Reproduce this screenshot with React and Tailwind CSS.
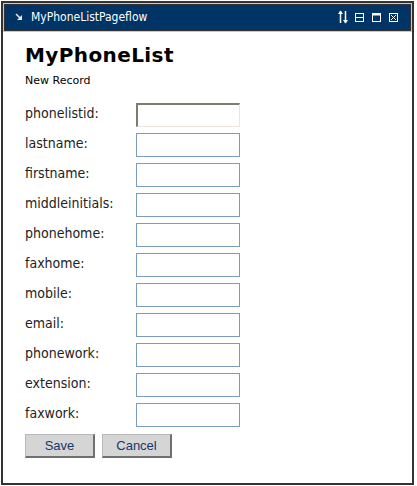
import React from 'react';

const FIELDS = [
  'phonelistid',
  'lastname',
  'firstname',
  'middleinitials',
  'phonehome',
  'faxhome',
  'mobile',
  'email',
  'phonework',
  'extension',
  'faxwork',
];

const cond = { fontFamily: '"DejaVu Sans Condensed", "DejaVu Sans", sans-serif', fontStretch: 'condensed' };

const TitleBar = () => (
  <div className="border border-[#c8c8c8]">
    <div className="border border-[#333] bg-[#003366] h-[27px] flex items-center text-white">
      <svg width="8" height="8" viewBox="0 0 8 8" className="ml-[10px] mt-[-2px]">
        <path d="M1 1 L6 6" stroke="#e6e6e6" strokeWidth="1.6" />
        <path d="M7 2 V7 H2 Z" fill="#e6e6e6" />
      </svg>
      <span className="ml-[8px] text-[12px] leading-[14px] mt-[-1px]" style={cond}>
        MyPhoneListPageflow
      </span>
      <div className="ml-auto mr-[12px] flex items-center mt-[-1px]">
        <svg width="10" height="14" viewBox="0 0 10 14">
          <path d="M2.5 1 V13" stroke="#fff" strokeWidth="1.5" />
          <path d="M2.5 0.5 L0 4 H5 Z" fill="#fff" />
          <path d="M7.5 1 V13" stroke="#fff" strokeWidth="1.5" />
          <path d="M7.5 13.5 L5 10 H10 Z" fill="#fff" />
        </svg>
        <svg width="9" height="9" viewBox="0 0 9 9" className="ml-[7px]">
          <rect x="0.5" y="0.5" width="8" height="8" fill="none" stroke="#fff" />
          <path d="M0 4.5 H9" stroke="#fff" />
        </svg>
        <svg width="9" height="9" viewBox="0 0 9 9" className="ml-[8px]">
          <rect x="0.5" y="0.5" width="8" height="8" fill="none" stroke="#fff" />
          <path d="M0 1.5 H9" stroke="#fff" strokeWidth="2" />
        </svg>
        <svg width="9" height="9" viewBox="0 0 9 9" className="ml-[8px]">
          <rect x="0.5" y="0.5" width="8" height="8" fill="none" stroke="#fff" />
          <path d="M2 2 L7 7 M7 2 L2 7" stroke="#fff" />
        </svg>
      </div>
    </div>
  </div>
);

const Field = ({ name, first }) => (
  <div className="flex items-center h-[24px]">
    <label className="w-[111px] pb-[4px] text-[14px] leading-[16px] text-[#222]" style={cond}>
      {name}:
    </label>
    <input
      className={
        first
          ? 'w-[104px] h-[24px] bg-white border-t-2 border-l-2 border-b border-r border-t-[#7d7d6d] border-l-[#7d7d6d] border-b-[#ece4dc] border-r-[#ece4dc] outline-none'
          : 'w-[104px] h-[24px] bg-white border border-[#7b9cbf] outline-none'
      }
    />
  </div>
);

const Button = ({ children, className = '' }) => (
  <button
    className={
      'w-[70px] h-[24px] bg-[#d5d5d5] border-t border-l border-[#b8b8b8] border-b-2 border-r-2 border-b-[#6f6f6f] border-r-[#6f6f6f] text-[13px] text-[#133a6b] ' +
      className
    }
    style={{ fontFamily: '"Liberation Sans", Arial, sans-serif' }}
  >
    {children}
  </button>
);

export default function App() {
  return (
    <div className="w-[417px] h-[486px] bg-white pt-px pl-px">
      <div className="w-[413px] h-[484px] border-2 border-[#333] flex flex-col">
        <TitleBar />
        <div className="pl-[22px] pt-[11px]">
          <h1
            className="text-[20px] leading-[24px] font-bold text-black"
            style={{ fontFamily: '"DejaVu Sans", Verdana, sans-serif', letterSpacing: '0.4px' }}
          >
            MyPhoneList
          </h1>
          <div
            className="mt-[7px] text-[11px] leading-[13px] text-black"
            style={{ fontFamily: '"DejaVu Sans", Verdana, sans-serif' }}
          >
            New Record
          </div>
          <form className="mt-[16px] flex flex-col gap-[6px]" onSubmit={(e) => e.preventDefault()}>
            {FIELDS.map((f, i) => (
              <Field key={f} name={f} first={i === 0} />
            ))}
            <div className="flex gap-[7px] mt-[1px]">
              <Button>Save</Button>
              <Button>Cancel</Button>
            </div>
          </form>
        </div>
      </div>
    </div>
  );
}
